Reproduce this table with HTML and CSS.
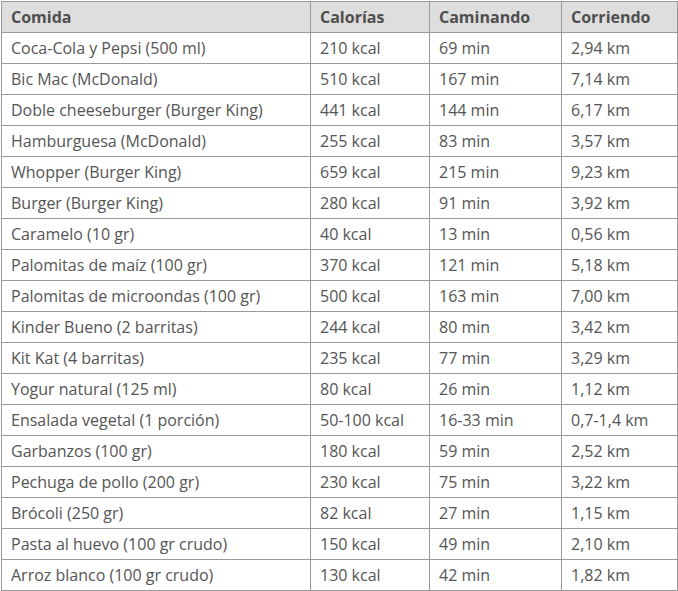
FILE: index.html
```
<!DOCTYPE html>
<html lang="es">
<head>
<meta charset="utf-8">
<link rel="stylesheet" href="styles.css">
</head>
<body>
<table class="tabla">
<colgroup><col class="c1"><col class="c2"><col class="c3"><col class="c4"></colgroup>
<thead>
<tr><th>Comida</th><th>Calorías</th><th>Caminando</th><th>Corriendo</th></tr>
</thead>
<tbody>
<tr><td>Coca-Cola y Pepsi (500 ml)</td><td>210 kcal</td><td>69 min</td><td>2,94 km</td></tr>
<tr><td>Bic Mac (McDonald)</td><td>510 kcal</td><td>167 min</td><td>7,14 km</td></tr>
<tr><td>Doble cheeseburger (Burger King)</td><td>441 kcal</td><td>144 min</td><td>6,17 km</td></tr>
<tr><td>Hamburguesa (McDonald)</td><td>255 kcal</td><td>83 min</td><td>3,57 km</td></tr>
<tr><td>Whopper (Burger King)</td><td>659 kcal</td><td>215 min</td><td>9,23 km</td></tr>
<tr><td>Burger (Burger King)</td><td>280 kcal</td><td>91 min</td><td>3,92 km</td></tr>
<tr><td>Caramelo (10 gr)</td><td>40 kcal</td><td>13 min</td><td>0,56 km</td></tr>
<tr><td>Palomitas de maíz (100 gr)</td><td>370 kcal</td><td>121 min</td><td>5,18 km</td></tr>
<tr><td>Palomitas de microondas (100 gr)</td><td>500 kcal</td><td>163 min</td><td>7,00 km</td></tr>
<tr><td>Kinder Bueno (2 barritas)</td><td>244 kcal</td><td>80 min</td><td>3,42 km</td></tr>
<tr><td>Kit Kat (4 barritas)</td><td>235 kcal</td><td>77 min</td><td>3,29 km</td></tr>
<tr><td>Yogur natural (125 ml)</td><td>80 kcal</td><td>26 min</td><td>1,12 km</td></tr>
<tr><td>Ensalada vegetal (1 porción)</td><td>50-100 kcal</td><td>16-33 min</td><td>0,7-1,4 km</td></tr>
<tr><td>Garbanzos (100 gr)</td><td>180 kcal</td><td>59 min</td><td>2,52 km</td></tr>
<tr><td>Pechuga de pollo (200 gr)</td><td>230 kcal</td><td>75 min</td><td>3,22 km</td></tr>
<tr><td>Brócoli (250 gr)</td><td>82 kcal</td><td>27 min</td><td>1,15 km</td></tr>
<tr><td>Pasta al huevo (100 gr crudo)</td><td>150 kcal</td><td>49 min</td><td>2,10 km</td></tr>
<tr><td>Arroz blanco (100 gr crudo)</td><td>130 kcal</td><td>42 min</td><td>1,82 km</td></tr>
</tbody>
</table>
</body>
</html>
```
FILE: styles.css
```
html, body {
  margin: 0;
  padding: 0;
  background: #fff;
}
body {
  padding: 1px 0 0 1px;
  font-family: "Open Sans", "Liberation Sans", sans-serif;
  font-size: 16px;
  color: #555;
}
.tabla {
  border-collapse: separate;
  border-spacing: 0;
  table-layout: fixed;
  width: 677px;
  border-left: 1px solid #9a9a9a;
  border-top: 1px solid #9a9a9a;
}
.c1 { width: 309px; }
.c2 { width: 119px; }
.c3 { width: 132px; }
.c4 { width: 116px; }
.tabla th,
.tabla td {
  box-sizing: border-box;
  height: 31px;
  padding: 0 8px 0 9px;
  text-align: left;
  vertical-align: middle;
  border-right: 1px solid #9a9a9a;
  border-bottom: 1px solid #9a9a9a;
  white-space: nowrap;
  line-height: 20px;
}
.tabla th {
  background: #dedede;
  font-weight: 700;
  color: #4f4f4f;
}
.tabla td {
  font-weight: 400;
}
```
